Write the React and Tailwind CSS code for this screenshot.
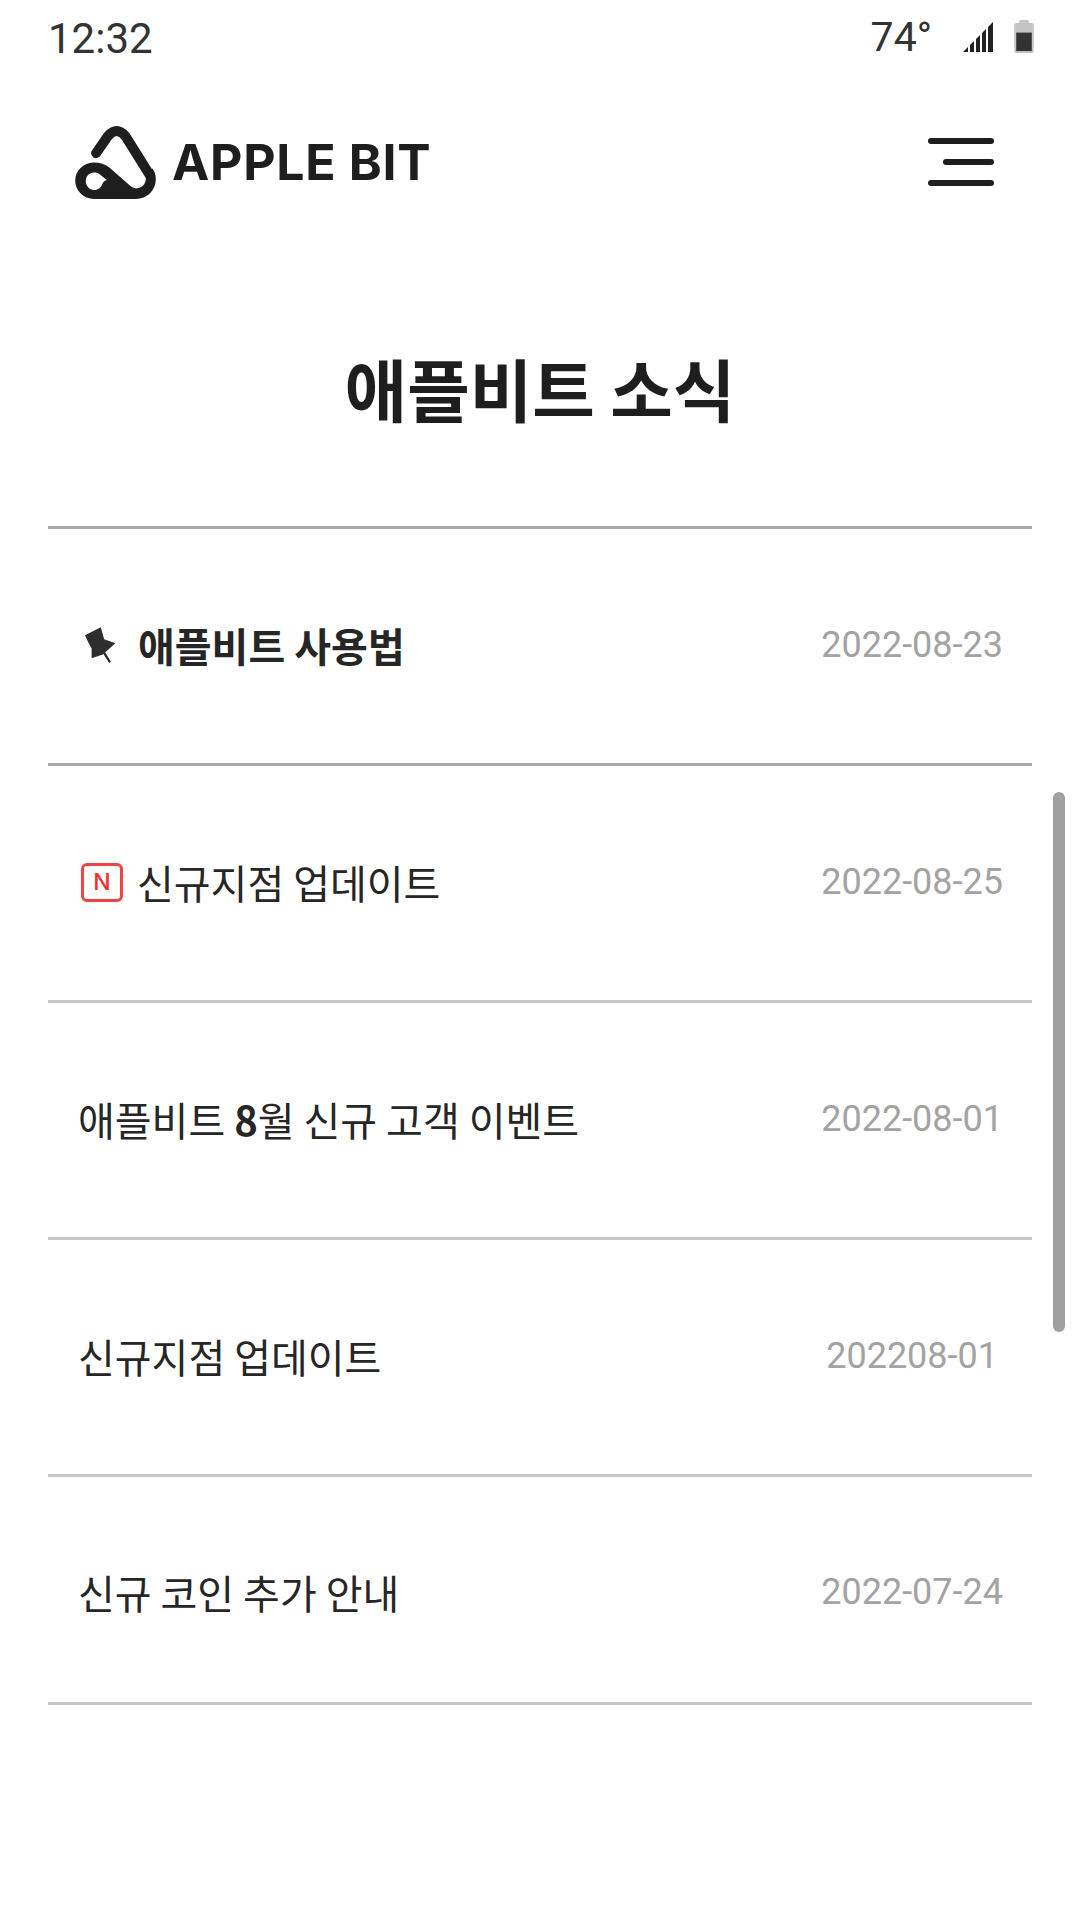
import React from "react";

const KR = "font-['Noto_Sans_CJK_KR','Noto_Sans',sans-serif]";
const ROBOTO = "font-['Roboto',sans-serif]";

function Logo() {
  return (
    <svg width="81" height="73" viewBox="15 30 243 220" fill="none">
      <path d="M78 112 L114 60 Q140 30 166 60 L240 178" stroke="#1e1e1e" strokeWidth="30" strokeLinecap="round" strokeLinejoin="round" />
      <path
        fillRule="evenodd"
        clipRule="evenodd"
        fill="#1e1e1e"
        d="M70 140 C90 140 105 145 118 155 L178 208 C186 215 192 218 200 218 C215 218 228 205 228 190 C228 183 226 178 222 172 L248 158 C255 168 258 178 258 190 C258 224 232 250 198 250 L72 250 C40 250 15 224 15 195 C15 165 40 140 70 140 Z M72 170 C57 170 47 182 47 196 C47 211 58 223 72 223 C85 223 92 215 96 207 C99 200 102 196 110 193 L88 175 C83 171 78 170 72 170 Z"
      />
    </svg>
  );
}

function Pin() {
  return (
    <svg width="33" height="38" viewBox="25 20 100 115">
      <path fill="#2e2e2e" d="M28 48 L76 24 L86 60 L120 72 L82 106 L48 118 L48 88 L40 74 Z" />
      <path d="M84 98 L104 130" stroke="#2e2e2e" strokeWidth="7" />
    </svg>
  );
}

function Row({ children, date, divider, cls = "h-[237px] pb-[2px]", dateCls = "pr-[29px]" }) {
  return (
    <div className={`flex items-center justify-between border-b-[3px] pl-[30px] ${divider} ${cls}`}>
      <div className={`flex items-center text-[40px] text-[#262626] ${KR}`}>{children}</div>
      <div className={`text-[36px] text-[#a3a3a3] ${ROBOTO} ${dateCls}`}>{date}</div>
    </div>
  );
}

export default function App() {
  return (
    <div className="relative h-[1920px] w-[1080px] overflow-hidden bg-white">
      <div className={`flex h-[76px] items-center justify-between pl-[48px] pr-[46px] text-[42px] text-[#333333] ${ROBOTO}`}>
        <span>12:32</span>
        <div className="flex items-center">
          <span className="mr-[31px] text-[41px]">74°</span>
          <svg width="30" height="30" viewBox="0 0 30 30" className="mb-[3px] mr-[21px]">
            <path fill="#222" d="M0 30 L30 0 V30 Z" />
            <path stroke="#fff" strokeWidth="2" d="M6 0V30M12 0V30M18 0V30M24 0V30" />
          </svg>
          <svg width="20" height="33" viewBox="0 0 20 34" className="mb-[4px]">
            <path fill="#c4c4c4" d="M6 0 H14 Q15 0 15 3 H18 Q20 3 20 5 V32 Q20 34 18 34 H2 Q0 34 0 32 V5 Q0 3 2 3 H5 Q5 0 6 0 Z" />
            <rect x="2" y="13" width="16" height="19" fill="#333" />
          </svg>
        </div>
      </div>

      <div className="mt-[48px] flex h-[76px] items-center justify-between pl-[75px] pr-[86px]">
        <div className="flex items-center">
          <Logo />
          <span className="ml-[16px] text-[50px] font-bold leading-none tracking-[0.7px] text-[#1e1e1e] font-['Inter',sans-serif]">APPLE BIT</span>
        </div>
        <div className="flex w-[66px] flex-col items-end gap-[15px]">
          <div className="h-[6px] w-[66px] rounded-full bg-[#1e1e1e]" />
          <div className="h-[6px] w-[51px] rounded-full bg-[#1e1e1e]" />
          <div className="h-[6px] w-[66px] rounded-full bg-[#1e1e1e]" />
        </div>
      </div>

      <h1 className={`mt-[140px] text-center text-[68px] font-bold leading-[96px] text-[#1e1e1e] ${KR}`}>애플비트 소식</h1>

      <div className="mx-[48px] mt-[90px] border-t-[3px] border-[#a8a8a8]">
        <Row divider="border-[#a8a8a8]" date="2022-08-23">
          <span className="ml-[6px] mr-[21px] flex"><Pin /></span>
          <span className="font-bold">애플비트 사용법</span>
        </Row>
        <Row divider="border-[#c6c6c6]" date="2022-08-25">
          <span className="ml-[3px] mr-[14px] flex h-[39px] w-[42px] items-center justify-center rounded-[6px] border-[3px] border-[#ef4444] text-[23px] font-medium text-[#f03030] font-['Inter',sans-serif]">N</span>
          <span>신규지점 업데이트</span>
        </Row>
        <Row divider="border-[#c6c6c6]" date="2022-08-01">
          <span className="whitespace-pre">애플비트 <span className="font-bold">8</span>월 신규 고객 이벤트</span>
        </Row>
        <Row divider="border-[#c6c6c6]" date="202208-01" dateCls="pr-[34px]">신규지점 업데이트</Row>
        <Row divider="border-[#c6c6c6]" cls="h-[228px] pt-[5px]" date="2022-07-24">신규 코인 추가 안내</Row>
      </div>

      <div className="absolute left-[1053px] top-[792px] h-[540px] w-[12px] rounded-full bg-[#a0a0a0]" />
    </div>
  );
}
